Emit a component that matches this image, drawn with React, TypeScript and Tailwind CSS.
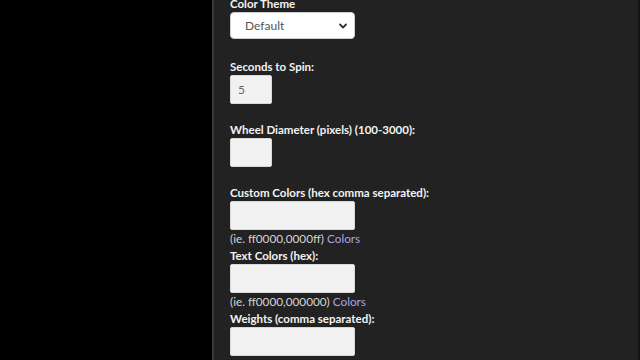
import React from 'react';

interface FieldProps {
  label: string;
  value?: string;
  wide?: boolean;
  hint?: string;
}

const Label: React.FC<{ children: React.ReactNode }> = ({ children }) => (
  <div className="h-[17px] text-[11.5px] leading-[17px] font-bold text-[#f2f2f2]">{children}</div>
);

const Field: React.FC<FieldProps> = ({ label, value = '', wide = false, hint }) => (
  <div className={hint ? '' : 'mb-[17px]'}>
    <Label>{label}</Label>
    <div
      className={`h-[29px] ${wide ? 'w-[125px]' : 'w-[42px]'} bg-[#f1f1f1] border border-[#d8d8d8] rounded-[2px] pl-[7px] text-[12px] leading-[27px] text-[#666]`}
    >
      {value}
    </div>
    {hint && (
      <div className="h-[17px] text-[11.75px] leading-[17px] text-[#d4d4d4]">
        {hint} <span className="text-[#a9a3e6]">Colors</span>
      </div>
    )}
  </div>
);

export default function App() {
  return (
    <div className="flex h-[360px] w-[640px] overflow-hidden bg-black" style={{ fontFamily: 'Lato, "Open Sans", sans-serif' }}>
      <div className="w-[212px] shrink-0 bg-black" />
      <div className="w-[2px] shrink-0 bg-[#3a3a3a]" />
      <div className="flex-1 bg-[#222222] pl-[16px]">
        <div className="-mt-[5px]">
          <Label>Color Theme</Label>
          <div className="flex h-[27px] w-[125px] items-center justify-between rounded-[4px] border border-[#cfcfcf] bg-white pl-[14px] pr-[6px] text-[12px] text-[#555]">
            <span>Default</span>
            <svg width="10" height="10" viewBox="0 0 10 10" fill="none">
              <path d="M2 3.5 L5 6.5 L8 3.5" stroke="#333" strokeWidth="1.8" strokeLinecap="round" strokeLinejoin="round" />
            </svg>
          </div>
          <div className="h-[19px]" />
          <Field label="Seconds to Spin:" value="5" />
          <Field label="Wheel Diameter (pixels) (100-3000):" />
          <Field label="Custom Colors (hex comma separated):" wide hint="(ie. ff0000,0000ff)" />
          <Field label="Text Colors (hex):" wide hint="(ie. ff0000,000000)" />
          <Field label="Weights (comma separated):" wide />
        </div>
      </div>
      <div className="w-[2px] shrink-0 bg-[#151515]" />
    </div>
  );
}
